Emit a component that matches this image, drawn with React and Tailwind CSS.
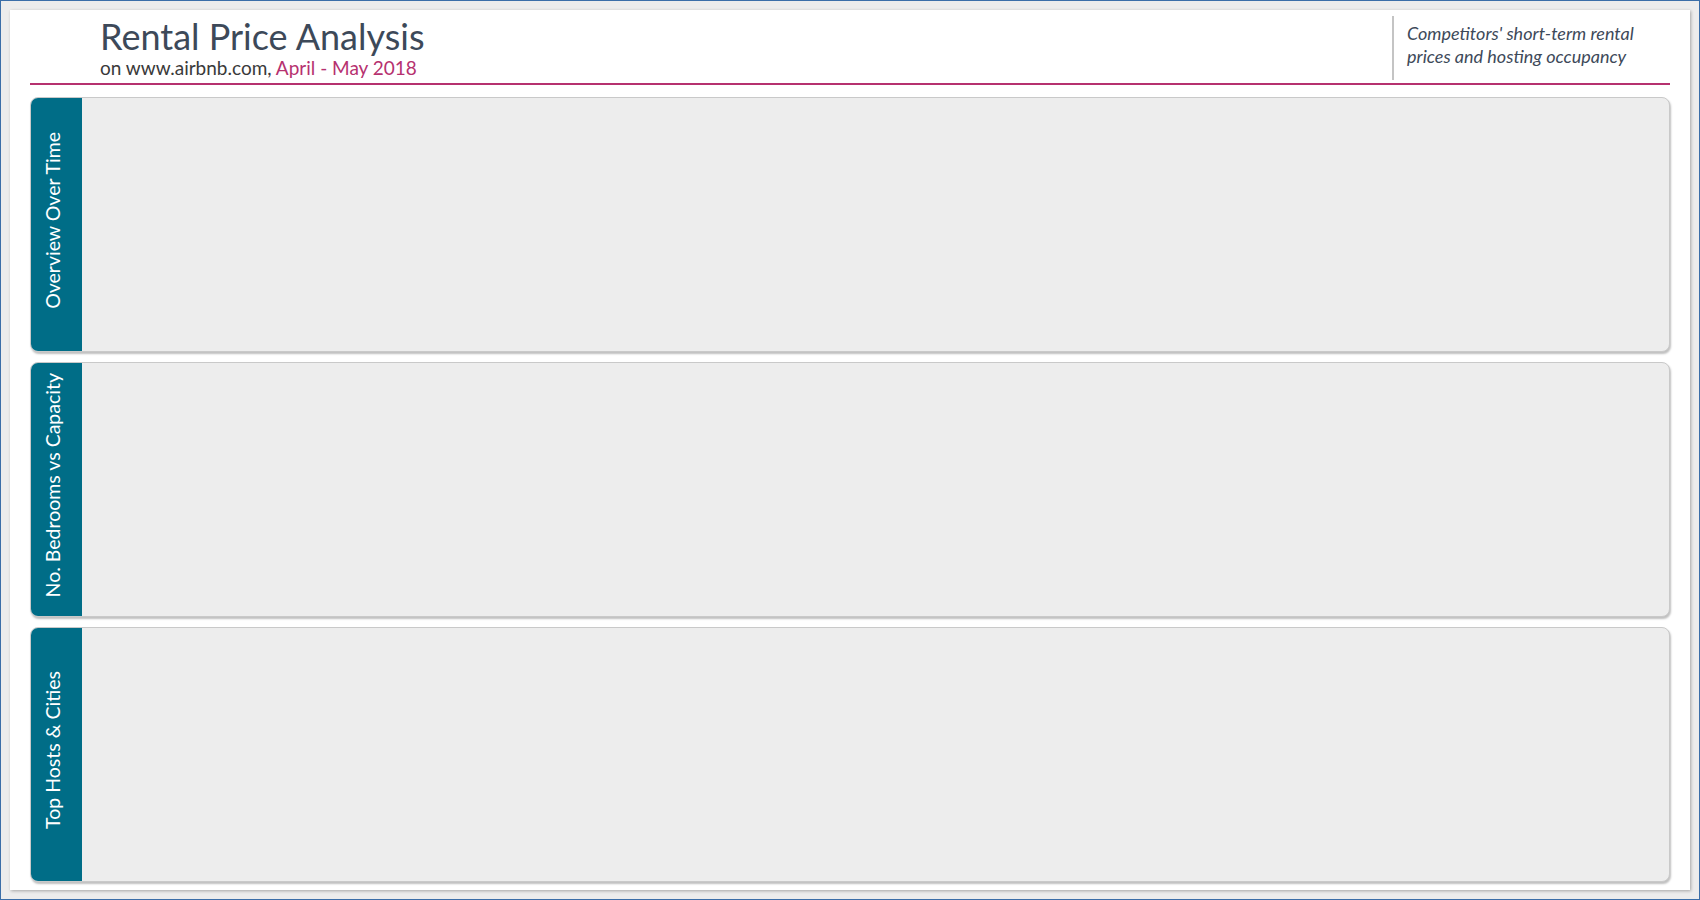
const sections = ['Overview Over Time', 'No. Bedrooms vs Capacity', 'Top Hosts & Cities'];

const Section = ({ title }) => {
    return (
        <div className="flex flex-1 overflow-hidden rounded-[8px] border border-[#c9c9c9] bg-[#ededed] shadow-[1px_2px_2px_rgba(0,0,0,0.25)]">
            <div className="flex w-[51px] shrink-0 items-center justify-center bg-[#006d87] pr-[7px] pb-[9px]">
                <span className="rotate-180 text-[19.5px] leading-[1.2] whitespace-nowrap text-white [writing-mode:vertical-rl]">{title}</span>
            </div>
            <div className="flex-1"></div>
        </div>
    );
};

export default function App() {
    return (
        <div className="h-[900px] w-[1700px] border border-[#3b6ea8] bg-[#ececec] p-[9px] font-['Lato',sans-serif]">
            <div className="flex h-full flex-col bg-white px-[20px] shadow-[1px_1px_3px_rgba(0,0,0,0.3)]">
                <div className="flex border-b-2 border-[#b6316f] pt-[6px] pb-[3px]">
                    <div className="flex flex-1 flex-col pt-[2px] pl-[70px]">
                        <h1 className="text-[36px] leading-none text-[#3d4959]">Rental Price Analysis</h1>
                        <div className="mt-[4px] text-[19px] leading-none text-[#3a3a3a]">
                            on www.airbnb.com, <span className="text-[#b6316f]">April - May 2018</span>
                        </div>
                    </div>
                    <div className="h-[64px] w-[278px] border-l-2 border-[#c4c4c4] pt-[6px] pl-[13px] text-[18px] leading-[1.3] text-[#3d4959] italic">
                        Competitors' short-term rental<br />prices and hosting occupancy
                    </div>
                </div>
                <div className="flex flex-1 flex-col gap-[10px] pt-[12px] pb-[8px]">
                    {sections.map((s) => (
                        <Section key={s} title={s} />
                    ))}
                </div>
            </div>
        </div>
    );
}
